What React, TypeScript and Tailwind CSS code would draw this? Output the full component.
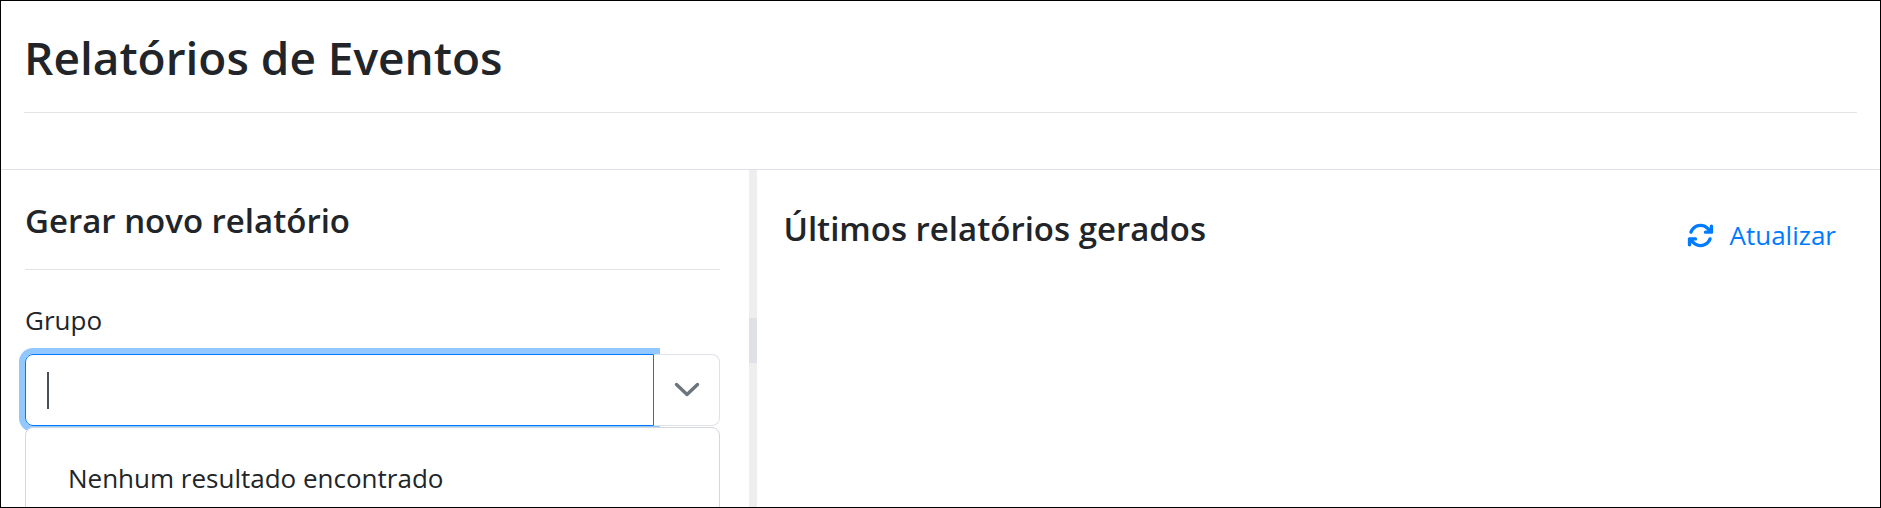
import { useState } from "react";
import { FaArrowsRotate } from "react-icons/fa6";

function PageHeader() {
  return (
    <header className="border-b border-[#dee2e6] px-[23px] pt-6 pb-14">
      <h1 className="border-b border-[#e3e4e5] pb-[22px] text-[46px] leading-[65px] font-semibold">
        Relatórios de Eventos
      </h1>
    </header>
  );
}

function GroupField() {
  const [query, setQuery] = useState("");

  return (
    <div className="relative">
      <label htmlFor="grupo" className="block text-[26px] leading-10">
        Grupo
      </label>
      <div className="mt-[14px] flex h-[72px]">
        <div className="relative min-w-0 flex-1">
          <input
            id="grupo"
            type="text"
            autoComplete="off"
            value={query}
            onChange={(e) => setQuery(e.target.value)}
            className="h-full w-full rounded-l-lg border border-[#007bff] px-5 text-[26px] caret-transparent shadow-[0_0_0_6px_#93c8ff] outline-none"
          />
          {query === "" ? (
            <span className="pointer-events-none absolute inset-y-0 left-[22px] my-auto h-[37px] w-[2px] bg-[#495057]" />
          ) : null}
        </div>
        <button
          type="button"
          aria-label="Abrir lista"
          className="relative flex w-[66px] items-center justify-center rounded-r-lg border border-l-0 border-[#dee2e6] bg-white"
        >
          <svg viewBox="0 0 26 16" className="h-4 w-[26px]" fill="none">
            <path
              d="M2.5 2.5 13 12.5 23.5 2.5"
              stroke="#6c757d"
              strokeWidth="3.4"
              strokeLinecap="round"
              strokeLinejoin="round"
            />
          </svg>
        </button>
      </div>
      <ul className="absolute inset-x-0 top-full mt-px rounded-lg border border-[#d6d7d8] bg-white py-5">
        <li className="px-[42px] py-2 text-[26px] leading-[44px]">
          Nenhum resultado encontrado
        </li>
      </ul>
    </div>
  );
}

export default function App() {
  return (
    <div className="flex h-screen flex-col overflow-hidden border border-black bg-white font-['Open_Sans','Noto_Sans',sans-serif] text-[#212529]">
      <PageHeader />
      <main className="grid min-h-0 flex-1 grid-cols-[2fr_8px_3fr]">
        <section className="min-w-0 pt-[26px] pr-[29px] pl-6">
          <h2 className="mb-[30px] border-b border-[#e3e4e5] pb-6 text-[33px] leading-[49px] font-semibold">
            Gerar novo relatório
          </h2>
          <GroupField />
        </section>
        <div className="flex items-center bg-[#eeeeee] pt-1">
          <div className="h-[45px] w-full bg-[#dee2e6]" />
        </div>
        <section className="flex min-w-0 items-start justify-between pt-[34px] pr-11 pl-[26px]">
          <h2 className="text-[33px] leading-[49px] font-semibold">
            Últimos relatórios gerados
          </h2>
          <a
            href="#atualizar"
            className="mt-[11px] flex items-center gap-4 text-[26px] leading-10 text-[#007bff]"
          >
            <FaArrowsRotate className="size-[27px]" />
            Atualizar
          </a>
        </section>
      </main>
    </div>
  );
}
